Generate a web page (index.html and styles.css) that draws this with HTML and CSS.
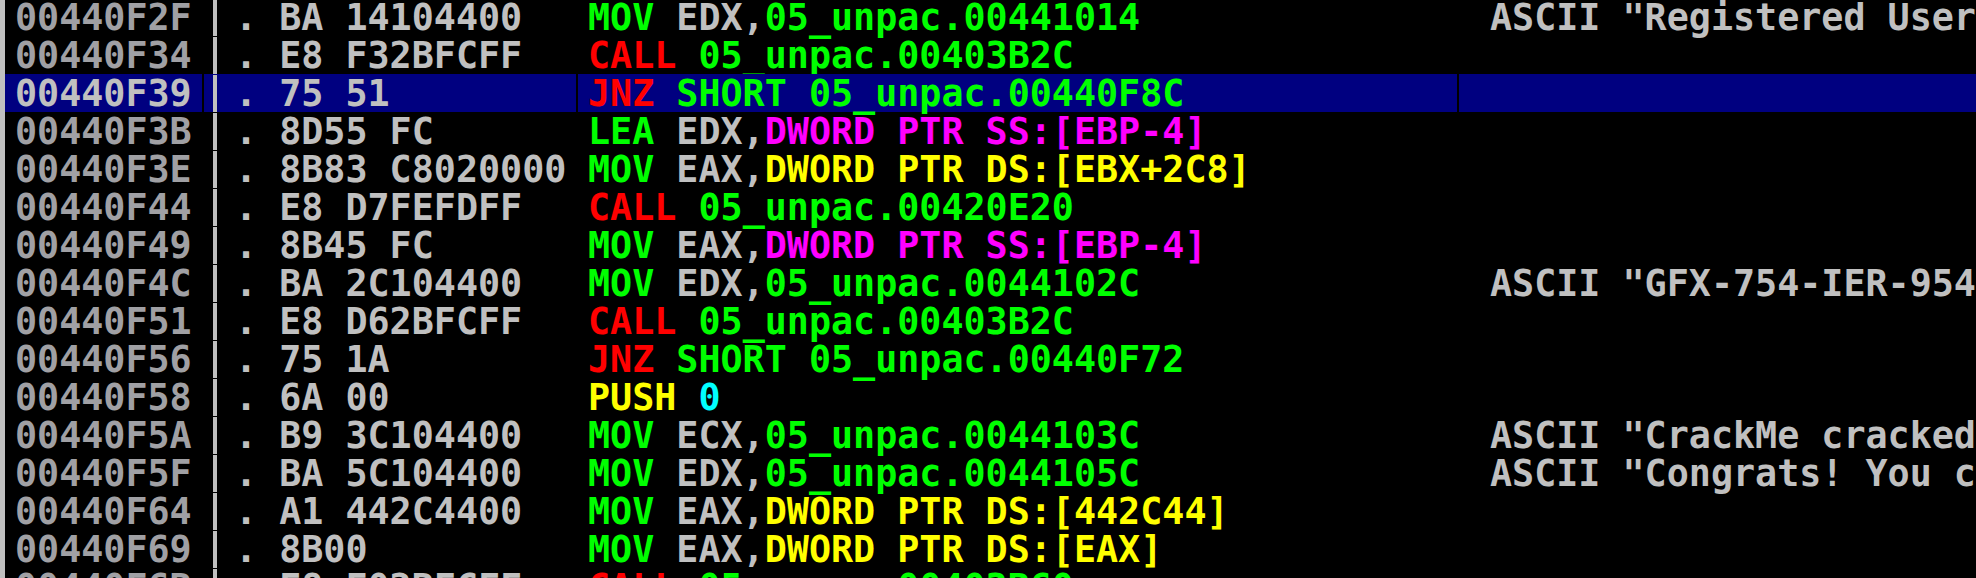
FILE: index.html
```html
<!DOCTYPE html>
<html lang="en">

<head>
    <meta charset="UTF-8">
    <meta name="viewport" content="width=device-width, initial-scale=1.0">
    <title>CPU - main thread, module 05_unpac</title>
    <link rel="stylesheet" href="styles.css">
</head>

<body>
    <div class="pane">
        <!-- disassembly listing -->
        <div class="listing">
            <div class="row">
                <div class="addr">00440F2F</div>
                <div class="hex"><span class="bytes">. BA 14104400</span></div>
                <div class="asm"><span class="g">MOV</span> EDX,<span class="g">05_unpac.00441014</span></div>
                <div class="note">ASCII &quot;Registered User&quot;</div>
            </div>
            <div class="row">
                <div class="addr">00440F34</div>
                <div class="hex"><span class="bytes">. E8 F32BFCFF</span></div>
                <div class="asm"><span class="r">CALL</span> <span class="g">05_unpac.00403B2C</span></div>
                <div class="note"></div>
            </div>
            <div class="row selected">
                <div class="addr">00440F39</div>
                <div class="hex"><span class="bytes">. 75 51</span></div>
                <div class="asm"><span class="r">JNZ</span> <span class="g">SHORT 05_unpac.00440F8C</span></div>
                <div class="note"></div>
            </div>
            <div class="row">
                <div class="addr">00440F3B</div>
                <div class="hex"><span class="bytes">. 8D55 FC</span></div>
                <div class="asm"><span class="g">LEA</span> EDX,<span class="m">DWORD PTR SS:[EBP-4]</span></div>
                <div class="note"></div>
            </div>
            <div class="row">
                <div class="addr">00440F3E</div>
                <div class="hex"><span class="bytes">. 8B83 C8020000</span></div>
                <div class="asm"><span class="g">MOV</span> EAX,<span class="y">DWORD PTR DS:[EBX+2C8]</span></div>
                <div class="note"></div>
            </div>
            <div class="row">
                <div class="addr">00440F44</div>
                <div class="hex"><span class="bytes">. E8 D7FEFDFF</span></div>
                <div class="asm"><span class="r">CALL</span> <span class="g">05_unpac.00420E20</span></div>
                <div class="note"></div>
            </div>
            <div class="row">
                <div class="addr">00440F49</div>
                <div class="hex"><span class="bytes">. 8B45 FC</span></div>
                <div class="asm"><span class="g">MOV</span> EAX,<span class="m">DWORD PTR SS:[EBP-4]</span></div>
                <div class="note"></div>
            </div>
            <div class="row">
                <div class="addr">00440F4C</div>
                <div class="hex"><span class="bytes">. BA 2C104400</span></div>
                <div class="asm"><span class="g">MOV</span> EDX,<span class="g">05_unpac.0044102C</span></div>
                <div class="note">ASCII &quot;GFX-754-IER-954&quot;</div>
            </div>
            <div class="row">
                <div class="addr">00440F51</div>
                <div class="hex"><span class="bytes">. E8 D62BFCFF</span></div>
                <div class="asm"><span class="r">CALL</span> <span class="g">05_unpac.00403B2C</span></div>
                <div class="note"></div>
            </div>
            <div class="row">
                <div class="addr">00440F56</div>
                <div class="hex"><span class="bytes">. 75 1A</span></div>
                <div class="asm"><span class="r">JNZ</span> <span class="g">SHORT 05_unpac.00440F72</span></div>
                <div class="note"></div>
            </div>
            <div class="row">
                <div class="addr">00440F58</div>
                <div class="hex"><span class="bytes">. 6A 00</span></div>
                <div class="asm"><span class="y">PUSH</span> <span class="c">0</span></div>
                <div class="note"></div>
            </div>
            <div class="row">
                <div class="addr">00440F5A</div>
                <div class="hex"><span class="bytes">. B9 3C104400</span></div>
                <div class="asm"><span class="g">MOV</span> ECX,<span class="g">05_unpac.0044103C</span></div>
                <div class="note">ASCII &quot;CrackMe cracked successfully&quot;</div>
            </div>
            <div class="row">
                <div class="addr">00440F5F</div>
                <div class="hex"><span class="bytes">. BA 5C104400</span></div>
                <div class="asm"><span class="g">MOV</span> EDX,<span class="g">05_unpac.0044105C</span></div>
                <div class="note">ASCII &quot;Congrats! You cracked this CrackMe!&quot;</div>
            </div>
            <div class="row">
                <div class="addr">00440F64</div>
                <div class="hex"><span class="bytes">. A1 442C4400</span></div>
                <div class="asm"><span class="g">MOV</span> EAX,<span class="y">DWORD PTR DS:[442C44]</span></div>
                <div class="note"></div>
            </div>
            <div class="row">
                <div class="addr">00440F69</div>
                <div class="hex"><span class="bytes">. 8B00</span></div>
                <div class="asm"><span class="g">MOV</span> EAX,<span class="y">DWORD PTR DS:[EAX]</span></div>
                <div class="note"></div>
            </div>
            <div class="row">
                <div class="addr">00440F6B</div>
                <div class="hex"><span class="bytes">. E8 F02BFCFF</span></div>
                <div class="asm"><span class="r">CALL</span> <span class="g">05_unpac.00403B60</span></div>
                <div class="note"></div>
            </div>
        </div>
    </div>
</body>

</html>
```
FILE: styles.css
```css
/* olly-ish listing */
body {
    margin: 0;
    background-color: #000;
    overflow: hidden;
    font-family: "DejaVu Sans Mono", monospace;
    font-size: 36.7px;
    font-weight: bold;
    color: #c0c0c0;
}

.pane {
    height: 578px;
    overflow: hidden;
    border-left: 5px solid #c0c0c0;
}

.listing {
    margin-top: -2px;
}

.row {
    display: grid;
    grid-template-columns: 197px 372px 879px minmax(0, 1fr);
    column-gap: 2px;
    height: 38px;
}

.row > div {
    padding-top: 1px;
    line-height: 37px;
    white-space: pre;
}

.addr {
    padding-left: 10px;
    color: #a0a0a4;
}

.hex {
    padding-left: 9px;
}

.hex .bytes {
    display: block;
    height: 100%;
    border-left: 4px solid #c0c0c0;
    padding-left: 18px;
}

.asm {
    padding-left: 10px;
}

.note {
    padding-left: 31px;
}

.row.selected > div {
    background-color: #000080;
}

.row.selected .addr {
    color: #c0c0c0;
}

.g { color: #00ff00; }
.r { color: #ff0000; }
.m { color: #ff00ff; }
.y { color: #ffff00; }
.c { color: #00ffff; }
```
